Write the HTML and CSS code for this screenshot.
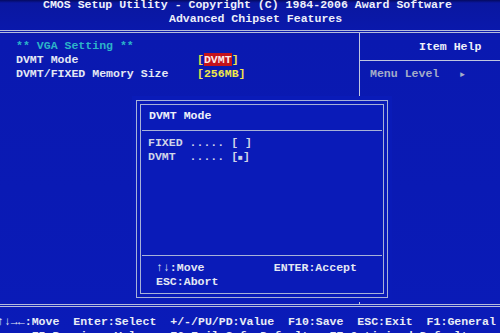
FILE: index.html
```html
<!DOCTYPE html>
<html lang="en">

<head>
    <meta charset="UTF-8">
    <title>CMOS Setup Utility - Advanced Chipset Features</title>
    <link rel="stylesheet" href="styles.css">
</head>

<body>
    <div class="screen">
        <header class="title">
            <div class="title-main">CMOS Setup Utility - Copyright (C) 1984-2006 Award Software</div>
            <div class="title-sub">Advanced Chipset Features</div>
        </header>

        <main class="panels">
            <section class="settings">
                <div class="row group">** VGA Setting **</div>
                <div class="row">
                    <span class="label">DVMT Mode</span>
                    <span class="value">[<span class="selected">DVMT</span>]</span>
                </div>
                <div class="row">
                    <span class="label">DVMT/FIXED Memory Size</span>
                    <span class="value">[256MB]</span>
                </div>
            </section>

            <aside class="help">
                <div class="help-title">Item Help</div>
                <div class="help-body">Menu Level   <span class="arrow">&#9658;</span></div>
            </aside>
        </main>

        <footer class="keys">
            <div class="keys-row">&#8593;&#8595;&#8594;&#8592;:Move  Enter:Select  +/-/PU/PD:Value  F10:Save  ESC:Exit  F1:General Help</div>
            <div class="keys-row">     F5:Previous Values  F6:Fail-Safe Defaults  F7:Optimized Defaults</div>
        </footer>

        <!-- popup con las opciones del item -->
        <div class="popup">
            <div class="popup-frame">
                <div class="popup-inner">
                    <div class="popup-title">DVMT Mode</div>
                    <div class="popup-options">
                        <div class="option">FIXED ..... [ ]</div>
                        <div class="option">DVMT  ..... [<span class="mark">&#9632;</span>]</div>
                    </div>
                    <div class="popup-keys">
                        <div class="key-line">&#8593;&#8595;:Move          ENTER:Accept</div>
                        <div class="key-line">ESC:Abort</div>
                    </div>
                </div>
            </div>
        </div>
    </div>
</body>

</html>
```

FILE: styles.css
```css
body {
    margin: 0;
    background-color: #0a19b0;
    font-family: "Liberation Mono", "DejaVu Sans Mono", monospace;
    font-size: 11.55px;
    font-weight: bold;
    line-height: 14px;
    color: #e4e8f4;
}

.screen {
    position: relative;
    width: 500px;
    height: 333px;
    overflow: hidden;
    background: linear-gradient(#050a60 0, #0a17a0 3px, #0a19b0 40px, #0a1bb8 100%);
}

/* Cabecera */
.title {
    margin-top: -2px;
    padding-bottom: 4px;
    border-bottom: 3px double #b4bcdc;
    color: #eef0fa;
}

.title-main,
.title-sub {
    white-space: pre;
}

.title-main {
    padding-left: 43px;
}

.title-sub {
    padding-left: 169px;
}

/* Paneles principales */
.panels {
    display: flex;
    height: 271px;
    border-bottom: 3px double #b4bcdc;
}

.settings {
    width: 359px;
    padding-top: 6px;
    border-right: 1px solid #c0c6e0;
}

.row {
    display: flex;
    padding-left: 16px;
    white-space: pre;
}

.group {
    color: #2cb4c8;
}

.label {
    width: 181px;
}

.value {
    color: #f0e64c;
}

.selected {
    background-color: #c4121c;
    color: #fbe8e8;
}

.help {
    flex: 1;
}

.help-title {
    padding: 7px 0 6px 59px;
    border-bottom: 1px solid #c0c6e0;
    color: #eef0fa;
}

.help-body {
    padding: 6px 0 0 10px;
    color: #a4acc8;
    white-space: pre;
}

.arrow {
    font-size: 8px;
}

/* Teclas */
.keys {
    padding-top: 8px;
    margin-left: -3px;
    color: #e8ecf6;
}

.keys-row {
    white-space: pre;
}

/* Popup */
.popup {
    position: absolute;
    left: 132px;
    top: 96px;
    padding: 4px;
    background-color: #0a1bb8;
}

.popup-frame {
    border: 1px solid #a8b2d8;
    padding: 3px;
}

.popup-inner {
    display: flex;
    flex-direction: column;
    width: 242px;
    height: 188px;
    border: 1px solid #a8b2d8;
}

.popup-title {
    padding: 4px 0 7px 7px;
    border-bottom: 1px solid #a8b2d8;
    margin: 0 1px;
    color: #eef0fa;
}

.popup-options {
    flex: 1;
    padding: 5px 0 0 7px;
    color: #cfd4e8;
}

.option,
.key-line {
    white-space: pre;
}

.mark {
    font-size: 8px;
}

.popup-keys {
    padding: 5px 0 4px 14px;
    border-top: 1px solid #a8b2d8;
    margin: 0 1px;
    color: #e4e8f4;
}
```
